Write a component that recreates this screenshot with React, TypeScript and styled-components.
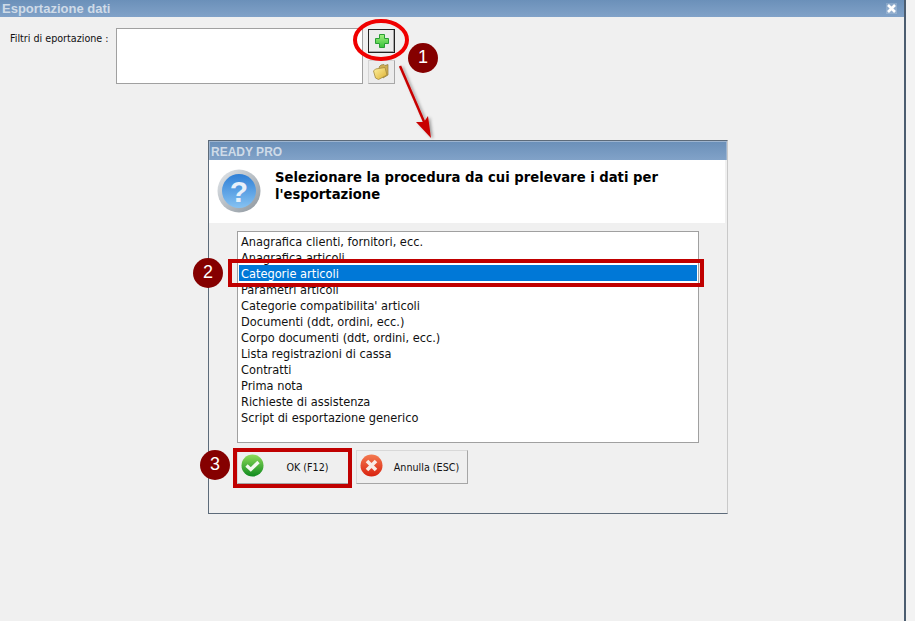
import React from 'react'
import styled, { createGlobalStyle } from 'styled-components'

const GlobalStyle = createGlobalStyle`
  html, body {
    margin: 0;
    padding: 0;
    background: #f3f3f3;
    overflow: hidden;
  }
  body {
    font-family: "DejaVu Sans", "Liberation Sans", sans-serif;
    font-stretch: condensed;
    color: #111;
  }
`

const Page = styled.div`
  position: relative;
  width: 915px;
  height: 621px;
  overflow: hidden;
`

const Window = styled.div`
  width: 904px;
  height: 621px;
  display: flex;
  flex-direction: column;
  background: #f0f0f0;
  border-right: 2px solid #4c5d70;
`

const TitleBar = styled.div`
  height: 17px;
  flex: none;
  display: flex;
  align-items: center;
  justify-content: space-between;
  padding: 0 7px 0 2px;
  background: linear-gradient(#6b90b9, #81a2c8);
`

const TitleText = styled.span<{ $size?: number }>`
  font-family: "Liberation Sans", sans-serif;
  font-weight: bold;
  font-size: ${p => p.$size ?? 13}px;
  color: #cfdbe8;
`

const CloseBox = styled.div`
  width: 11px;
  height: 11px;
  display: flex;
  align-items: center;
  justify-content: center;
  background: rgba(255, 255, 255, 0.18);
`

const Body = styled.div`
  flex: 1;
  display: flex;
  flex-direction: column;
  padding: 11px 0 0 10px;
`

const FilterRow = styled.div`
  display: flex;
  align-items: flex-start;
`

const FilterLabel = styled.label`
  width: 106px;
  padding-top: 4px;
  font-size: 10.67px;
  line-height: 14px;
`

const FilterBox = styled.div`
  width: 245px;
  height: 54px;
  background: #fff;
  border: 1px solid #a0a0a0;
`

const SideButtons = styled.div`
  margin-left: 5px;
  margin-top: 1px;
  display: flex;
  flex-direction: column;
  gap: 7px;
`

const IconButton = styled.div<{ $active?: boolean }>`
  width: 27px;
  height: 24px;
  box-sizing: border-box;
  display: flex;
  align-items: center;
  justify-content: center;
  background: #ececec;
  border: 1px solid ${p => (p.$active ? '#222' : '#d4d4d4')};
  border-right-color: ${p => (p.$active ? '#222' : '#a8a8a8')};
  border-bottom-color: ${p => (p.$active ? '#222' : '#a8a8a8')};
  box-shadow: ${p => (p.$active ? 'inset -1px -1px 0 #a8a8a8' : 'none')};
`

const Dialog = styled.div`
  width: 520px;
  height: 374px;
  box-sizing: border-box;
  margin: 56px 0 0 198px;
  display: flex;
  flex-direction: column;
  background: #f0f0f0;
  border: 1px solid #5d6b7a;
  border-right-color: #c9c9c9;
`

const DialogTitle = styled.div`
  height: 19px;
  flex: none;
  display: flex;
  align-items: center;
  padding: 2px 0 0 1px;
  border: 1px solid #9db4cf;
  border-bottom: none;
  box-sizing: border-box;
  background: linear-gradient(#6b90b9, #81a2c8);
`

const DialogHeader = styled.div`
  height: 63px;
  flex: none;
  margin-right: 2px;
  display: flex;
  align-items: flex-start;
  box-sizing: border-box;
  background: #fff;
  padding: 7px 20px 0 8px;
  gap: 14px;
`

const QuestionSlot = styled.div`
  flex: none;
  margin-top: 2px;
  height: 44px;
`

const HeaderText = styled.div`
  font-size: 14.67px;
  font-weight: bold;
  line-height: 17px;
  padding-top: 1px;
  color: #000;
`

const OptionList = styled.ul`
  list-style: none;
  width: 462px;
  height: 212px;
  box-sizing: border-box;
  margin: 8px 0 0 28px;
  padding: 1px;
  background: #fff;
  border: 1px solid #a0a0a0;
`

const OptionItem = styled.li<{ $selected?: boolean }>`
  height: 16px;
  line-height: 17px;
  padding-left: 2px;
  font-size: 12.67px;
  color: ${p => (p.$selected ? '#fff' : '#111')};
  background: ${p => (p.$selected ? '#0078d7' : 'transparent')};
`

const ButtonRow = styled.div`
  display: flex;
  gap: 7px;
  margin: 7px 0 0 28px;
`

const ActionButton = styled.div`
  width: 112px;
  height: 34px;
  box-sizing: border-box;
  display: flex;
  align-items: center;
  padding-left: 3px;
  background: #efefef;
  border: 1px solid #d8d8d8;
  border-right-color: #a6a6a6;
  border-bottom-color: #a6a6a6;

  svg {
    margin-bottom: 3px;
  }
`

const ButtonLabel = styled.span`
  flex: 1;
  text-align: center;
  padding-left: 3px;
  font-size: 10.67px;
`

const Overlay = styled.svg`
  position: absolute;
  left: 0;
  top: 0;
  pointer-events: none;
`

const Highlight = styled.div<{ $x: number; $y: number; $w: number; $h: number }>`
  position: absolute;
  left: ${p => p.$x}px;
  top: ${p => p.$y}px;
  width: ${p => p.$w}px;
  height: ${p => p.$h}px;
  box-sizing: border-box;
  border: 4px solid #c00000;
`

const Badge = styled.div<{ $x: number; $y: number }>`
  position: absolute;
  left: ${p => p.$x}px;
  top: ${p => p.$y}px;
  width: 30px;
  height: 30px;
  border-radius: 50%;
  background: #850000;
  color: #fff;
  font-family: "Liberation Sans", sans-serif;
  font-size: 18px;
  line-height: 29px;
  text-align: center;
`

const CloseIcon = () => (
  <svg width="9" height="9" viewBox="0 0 9 9">
    <path d="M1 1 L8 8 M8 1 L1 8" stroke="#fff" strokeWidth="2.6" />
  </svg>
)

const PlusIcon = () => (
  <svg width="16" height="16" viewBox="0 0 16 16">
    <defs>
      <linearGradient id="plusFill" x1="0" y1="0" x2="0" y2="1">
        <stop offset="0" stopColor="#a2f07f" />
        <stop offset="1" stopColor="#37c23a" />
      </linearGradient>
    </defs>
    <path
      d="M5.5 1.5 H10.5 V5.5 H14.5 V10.5 H10.5 V14.5 H5.5 V10.5 H1.5 V5.5 H5.5 Z"
      fill="url(#plusFill)"
      stroke="#2a9c35"
    />
  </svg>
)

const FolderIcon = () => (
  <svg width="17" height="18" viewBox="0 0 17 18">
    <defs>
      <linearGradient id="folderFill" x1="0" y1="0" x2="1" y2="1">
        <stop offset="0" stopColor="#fff2a0" />
        <stop offset="1" stopColor="#dcb032" />
      </linearGradient>
    </defs>
    <path d="M6 4 L8 2 L11 1.5 L12 2.5 L15 1.5 L15 12 L10 15 Z" fill="#cfae52" stroke="#8f7c3e" strokeWidth="0.7" />
    <path d="M0.5 8 L2.5 6 L12 4.5 L14 12 L5.5 16.5 L2.5 15 Z" fill="url(#folderFill)" stroke="#a38a3c" strokeWidth="0.8" />
  </svg>
)

const QuestionIcon = () => (
  <svg width="44" height="44" viewBox="0 0 44 44">
    <defs>
      <linearGradient id="qRing" x1="0" y1="0" x2="1" y2="1">
        <stop offset="0" stopColor="#e4e8ec" />
        <stop offset="1" stopColor="#8b949c" />
      </linearGradient>
      <linearGradient id="qBall" x1="0" y1="0" x2="0" y2="1">
        <stop offset="0" stopColor="#2f7fd6" />
        <stop offset="1" stopColor="#86c2f2" />
      </linearGradient>
    </defs>
    <circle cx="22" cy="22" r="21.5" fill="url(#qRing)" />
    <circle cx="22" cy="22" r="17" fill="url(#qBall)" />
    <text
      x="22"
      y="33"
      textAnchor="middle"
      fontFamily="Liberation Sans, sans-serif"
      fontWeight="bold"
      fontSize="30"
      fill="#e8f0fa"
    >
      ?
    </text>
  </svg>
)

const CheckIcon = () => (
  <svg width="23" height="23" viewBox="0 0 23 23">
    <defs>
      <linearGradient id="okBall" x1="0" y1="0" x2="0" y2="1">
        <stop offset="0" stopColor="#8fdc5a" />
        <stop offset="1" stopColor="#0f8a1f" />
      </linearGradient>
    </defs>
    <circle cx="11.5" cy="11.5" r="11" fill="url(#okBall)" />
    <path d="M5.5 11.5 L9.8 15.5 L17.5 8" fill="none" stroke="#f4f8f0" strokeWidth="3.4" />
  </svg>
)

const CancelIcon = () => (
  <svg width="23" height="23" viewBox="0 0 23 23">
    <defs>
      <linearGradient id="koBall" x1="0" y1="0" x2="0" y2="1">
        <stop offset="0" stopColor="#f47a50" />
        <stop offset="1" stopColor="#d9220f" />
      </linearGradient>
    </defs>
    <circle cx="11.5" cy="11.5" r="11" fill="url(#koBall)" />
    <path d="M7 7 L16 16 M16 7 L7 16" stroke="#f8ece6" strokeWidth="3.6" />
  </svg>
)

const options = [
  'Anagrafica clienti, fornitori, ecc.',
  'Anagrafica articoli',
  'Categorie articoli',
  'Parametri articoli',
  "Categorie compatibilita' articoli",
  'Documenti (ddt, ordini, ecc.)',
  'Corpo documenti (ddt, ordini, ecc.)',
  'Lista registrazioni di cassa',
  'Contratti',
  'Prima nota',
  'Richieste di assistenza',
  'Script di esportazione generico',
]

export default function App() {
  return (
    <Page>
      <GlobalStyle />
      <Window>
        <TitleBar>
          <TitleText>Esportazione dati</TitleText>
          <CloseBox>
            <CloseIcon />
          </CloseBox>
        </TitleBar>
        <Body>
          <FilterRow>
            <FilterLabel>Filtri di eportazione :</FilterLabel>
            <FilterBox />
            <SideButtons>
              <IconButton $active>
                <PlusIcon />
              </IconButton>
              <IconButton>
                <FolderIcon />
              </IconButton>
            </SideButtons>
          </FilterRow>
          <Dialog>
            <DialogTitle>
              <TitleText $size={12}>READY PRO</TitleText>
            </DialogTitle>
            <DialogHeader>
              <QuestionSlot>
                <QuestionIcon />
              </QuestionSlot>
              <HeaderText>Selezionare la procedura da cui prelevare i dati per l'esportazione</HeaderText>
            </DialogHeader>
            <OptionList>
              {options.map((option, i) => (
                <OptionItem key={option} $selected={i === 2}>
                  {option}
                </OptionItem>
              ))}
            </OptionList>
            <ButtonRow>
              <ActionButton>
                <CheckIcon />
                <ButtonLabel>OK (F12)</ButtonLabel>
              </ActionButton>
              <ActionButton>
                <CancelIcon />
                <ButtonLabel>Annulla (ESC)</ButtonLabel>
              </ActionButton>
            </ButtonRow>
          </Dialog>
        </Body>
      </Window>
      <Overlay width="915" height="621" viewBox="0 0 915 621">
        <defs>
          <filter id="arrowShadow" x="-30%" y="-10%" width="160%" height="120%">
            <feDropShadow dx="2" dy="1" stdDeviation="1.5" floodColor="#000" floodOpacity="0.35" />
          </filter>
        </defs>
        <ellipse cx="381" cy="40" rx="26" ry="19" fill="none" stroke="#f00000" strokeWidth="4" />
        <g filter="url(#arrowShadow)">
          <line x1="400" y1="66" x2="425" y2="124" stroke="#c80000" strokeWidth="2.5" />
          <path d="M431 138 L416 122 L424 122 L428 116 Z" fill="#c80000" />
        </g>
      </Overlay>
      <Highlight $x={228} $y={259} $w={476} $h={28} />
      <Highlight $x={233} $y={448} $w={119} $h={40} />
      <Badge $x={408} $y={43}>1</Badge>
      <Badge $x={193} $y={258}>2</Badge>
      <Badge $x={200} $y={450}>3</Badge>
    </Page>
  )
}
